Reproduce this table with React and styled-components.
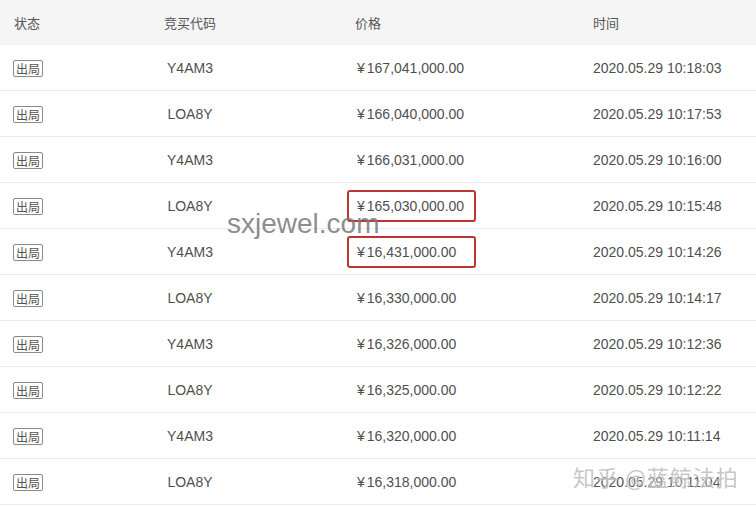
import React from "react";
import styled, { createGlobalStyle } from "styled-components";

const GlobalStyle = createGlobalStyle`
	html, body {
		margin: 0;
		padding: 0;
		background: #fff;
	}
	body {
		font-family: "Liberation Sans", Arial, "Noto Sans CJK SC", sans-serif;
		color: #4f4f4f;
	}
`;

const rows = [
	{ code: "Y4AM3", price: "167,041,000.00", time: "2020.05.29 10:18:03" },
	{ code: "LOA8Y", price: "166,040,000.00", time: "2020.05.29 10:17:53" },
	{ code: "Y4AM3", price: "166,031,000.00", time: "2020.05.29 10:16:00" },
	{ code: "LOA8Y", price: "165,030,000.00", time: "2020.05.29 10:15:48", mark: true },
	{ code: "Y4AM3", price: "16,431,000.00", time: "2020.05.29 10:14:26", mark: true },
	{ code: "LOA8Y", price: "16,330,000.00", time: "2020.05.29 10:14:17" },
	{ code: "Y4AM3", price: "16,326,000.00", time: "2020.05.29 10:12:36" },
	{ code: "LOA8Y", price: "16,325,000.00", time: "2020.05.29 10:12:22" },
	{ code: "Y4AM3", price: "16,320,000.00", time: "2020.05.29 10:11:14" },
	{ code: "LOA8Y", price: "16,318,000.00", time: "2020.05.29 10:11:04" },
];

const App = () => {
	return (
		<Page>
			<GlobalStyle />
			<Table>
				<HeadRow>
					<Cell $pad={14}>状态</Cell>
					<Cell $center>竞买代码</Cell>
					<Cell $pad={105}>价格</Cell>
					<Cell $pad={3}>时间</Cell>
				</HeadRow>
				{rows.map((r, i) => (
					<Row key={i}>
						<Cell $pad={13}>
							<Badge>出局</Badge>
						</Cell>
						<Cell $center>{r.code}</Cell>
						<Cell $pad={107}>
							<Price $mark={r.mark}>
								<Yen>¥</Yen>
								{r.price}
							</Price>
						</Cell>
						<Cell $pad={3}>{r.time}</Cell>
					</Row>
				))}
			</Table>
			<SiteMark>sxjewel.com</SiteMark>
			<ZhihuMark>知乎 @蓝鲸法拍</ZhihuMark>
		</Page>
	);
};

export default App;

const Page = styled.div`
	position: relative;
	width: 756px;
	height: 507px;
	overflow: hidden;
	background: #fff;
`;

const Table = styled.div`
	display: flex;
	flex-direction: column;
`;

const HeadRow = styled.div`
	display: grid;
	grid-template-columns: 130px 120px 340px 1fr;
	align-items: center;
	height: 45px;
	background: #f5f5f5;
	font-family: "Noto Sans CJK SC", "Liberation Sans", sans-serif;
	font-size: 13px;
	color: #555;
`;

const Row = styled.div`
	display: grid;
	grid-template-columns: 130px 120px 340px 1fr;
	align-items: center;
	height: 45px;
	padding-top: 1px;
	box-sizing: border-box;
	height: 46px;
	border-bottom: 1px solid #ececec;
	font-size: 14px;
	line-height: 16px;
	color: #4f4f4f;
`;

const Cell = styled.div`
	display: flex;
	align-items: center;
	justify-content: ${(p) => (p.$center ? "center" : "flex-start")};
	padding-left: ${(p) => (p.$center ? 0 : p.$pad || 0)}px;
	white-space: nowrap;
`;

const Badge = styled.span`
	display: inline-block;
	box-sizing: border-box;
	height: 17px;
	border: 1px solid #8a8a8a;
	border-radius: 2px;
	padding: 0 2px;
	font-family: "Noto Sans CJK SC", sans-serif;
	font-size: 12px;
	line-height: 15px;
	color: #555;
`;

const Price = styled.span`
	display: inline-block;
	box-sizing: border-box;
	${(p) =>
		p.$mark &&
		`
		width: 129px;
		margin-left: -10px;
		padding: 6px 8px;
		border: 2px solid #bd3532;
		border-radius: 3px;
	`}
`;

const Yen = styled.span`
	margin-right: 2px;
`;

const SiteMark = styled.div`
	position: absolute;
	left: 227px;
	top: 208px;
	font-family: "Liberation Sans", Arial, sans-serif;
	font-size: 28px;
	color: rgba(120, 120, 120, 0.85);
	pointer-events: none;
`;

const ZhihuMark = styled.div`
	position: absolute;
	left: 573px;
	top: 460px;
	font-family: "Noto Sans CJK SC", sans-serif;
	font-size: 22px;
	letter-spacing: 1px;
	color: rgba(150, 150, 150, 0.55);
	text-shadow: 0 0 2px #fff;
	pointer-events: none;
`;
